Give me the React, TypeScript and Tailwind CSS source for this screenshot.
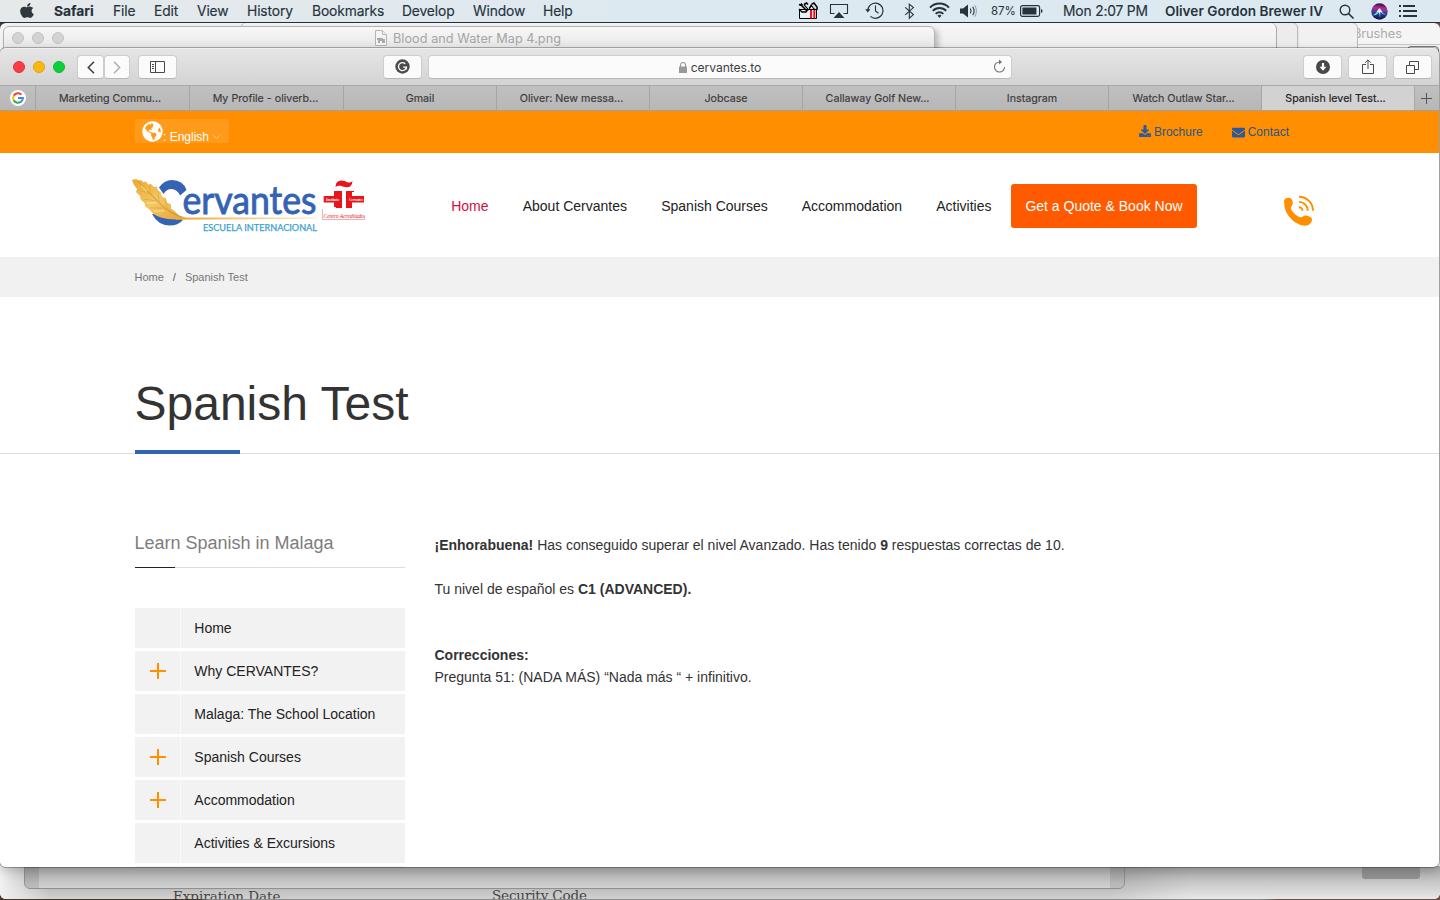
import React from "react";
import { FaApple, FaGlobeAmericas, FaDownload, FaEnvelope } from "react-icons/fa";

const menu = [
  { label: "Safari", cls: "w-[59px] font-bold tracking-[-0.02px]" },
  { label: "File", cls: "w-[41px]" },
  { label: "Edit", cls: "w-[43px]" },
  { label: "View", cls: "w-[50px]" },
  { label: "History", cls: "w-[65px]" },
  { label: "Bookmarks", cls: "w-[90px]" },
  { label: "Develop", cls: "w-[71px]" },
  { label: "Window", cls: "w-[70px]" },
  { label: "Help", cls: "w-[40px]" },
];

const tabs = [
  { label: "Marketing Commu...", cls: "pr-[5px]" },
  { label: "My Profile - oliverb...", cls: "pr-[2px]" },
  { label: "Gmail", cls: "" },
  { label: "Oliver: New messa...", cls: "pr-[3px]" },
  { label: "Jobcase", cls: "" },
  { label: "Callaway Golf New...", cls: "pr-[3px]" },
  { label: "Instagram", cls: "" },
  { label: "Watch Outlaw Star...", cls: "pr-[3px]" },
];

const nav = [
  { label: "Home", cls: "w-[71.5px] text-[#d0103f]" },
  { label: "About Cervantes", cls: "w-[138.5px]" },
  { label: "Spanish Courses", cls: "w-[140.5px]" },
  { label: "Accommodation", cls: "w-[134.5px]" },
  { label: "Activities", cls: "w-[75px]" },
];

const sideLinks = [
  { label: "Home", plus: false },
  { label: "Why CERVANTES?", plus: true },
  { label: "Malaga: The School Location", plus: false },
  { label: "Spanish Courses", plus: true },
  { label: "Accommodation", plus: true },
  { label: "Activities & Excursions", plus: false },
  { label: "", plus: false },
];

function StatusIcons() {
  return (
    <svg width="190" height="22" viewBox="795 0 190 22" fill="none" className="shrink-0 text-[#26333c]">
      <path d="M799.5 9.500h17v9h-17z" fill="#e8f0f4" stroke="#000" />
      <path d="M799 9l3 3h4l1.500-2" stroke="#000" strokeWidth="1.300" />
      <path d="M799 4.500l2.500 1L807 11M801 3.500l1.500 2M804 4.500l5 5.500M804 4.500l2.500-1.500 1.500 1.500M809 9l3-5 2-1 3 4v3M811.500 5l3.500 5" stroke="#000" strokeWidth="1.500" />
      <path d="M805.500 5l3.500 4M812 4.500l2.500 4" stroke="#fff" strokeWidth="0.800" />
      <path d="M810 10h2v8.500h-2zM813.300 10h2v8.500h-2z" fill="#ee1018" />
      <path d="M834.5 13.5h-4v-9h17v9h-4" stroke="currentColor" strokeWidth="1.1" />
      <path d="M833.5 18l5.5-6 5.5 6z" fill="currentColor" />
      <path d="M867.8 10.5a7.6 7.6 0 1 1 2.6 5.9" stroke="currentColor" strokeWidth="1.2" />
      <path d="M865.2 9.2h5.2l-2.6 3.2z" fill="currentColor" />
      <path d="M875.5 5.5v5.5l3 2.2" stroke="currentColor" strokeWidth="1.1" />
      <path d="M905.2 7.4l8.2 7.2-4.1 3.6V4.2l4.1 3.4-8.2 7.2" stroke="currentColor" strokeWidth="1.1" />
      <g stroke="currentColor" strokeWidth="2">
        <path d="M930 7.6a13.2 13.2 0 0 1 19 0" />
        <path d="M932.8 10.8a9.2 9.2 0 0 1 13.4 0" />
        <path d="M935.7 13.9a5.2 5.2 0 0 1 7.6 0" />
      </g>
      <path d="M939.5 18l-2-2.4a3 3 0 0 1 4 0z" fill="currentColor" />
      <path d="M960 8.5h3l5-4v13l-5-4h-3z" fill="currentColor" />
      <path d="M970.3 8.5q1.6 2.5 0 5M972.7 6.7q2.8 4.3 0 8.6" stroke="currentColor" strokeWidth="1.1" />
      <path d="M974.8 5.2q3.2 5.8 0 11.6" stroke="#8fa0aa" strokeWidth="1" />
    </svg>
  );
}

function MenuBar() {
  return (
    <header className="relative z-10 flex h-[23px] items-center border-b border-[#22303a] bg-gradient-to-r from-[#e6e9ea] via-[#dce9f1] to-[#dce9f0] pl-[20px] text-[13.8px] leading-[22px] text-[#26333c]">
      <FaApple className="mb-[2px] h-[17px] w-[14px] shrink-0 text-[#30383d]" preserveAspectRatio="none" />
      <nav className="ml-[20px] flex w-[741px] shrink-0 tracking-[-0.12px] [-webkit-text-stroke:0.15px]">
        {menu.map((m) => (
          <span key={m.label} className={`shrink-0 whitespace-nowrap ${m.cls}`}>
            {m.label}
          </span>
        ))}
      </nav>
      <StatusIcons />
      <span className="ml-[6px] w-[29px] text-[11.5px] tracking-[-0.1px]">87%</span>
      <svg width="24" height="12" viewBox="0 0 24 12" className="shrink-0">
        <rect x="0.6" y="0.6" width="19" height="10.8" rx="1.8" fill="none" stroke="#26333c" strokeWidth="1.2" />
        <rect x="2.4" y="2.4" width="14" height="7.2" rx="0.5" fill="#26333c" />
        <path d="M21 4v4q1.6-.6 1.6-2T21 4z" fill="#26333c" />
      </svg>
      <span className="ml-[19px] w-[102px] whitespace-nowrap tracking-[-0.16px] [-webkit-text-stroke:0.15px]">Mon 2:07 PM</span>
      <span className="w-[174px] whitespace-nowrap text-[13.6px] font-semibold tracking-[0.02px]">Oliver Gordon Brewer IV</span>
      <svg width="16" height="16" viewBox="0 0 16 16" fill="none" stroke="#26333c" strokeWidth="1.4" className="mt-px shrink-0">
        <circle cx="6" cy="6" r="4.8" />
        <path d="M9.5 9.5l5 5" strokeWidth="1.7" />
      </svg>
      <svg width="17" height="17" viewBox="0 0 17 17" className="ml-[16px] shrink-0">
        <defs>
          <linearGradient id="siri" x1="0.5" y1="0" x2="0.4" y2="1">
            <stop offset="0" stopColor="#30102e" />
            <stop offset="0.3" stopColor="#b52a9a" />
            <stop offset="0.55" stopColor="#3d3f9e" />
            <stop offset="1" stopColor="#0a1240" />
          </linearGradient>
        </defs>
        <circle cx="8.5" cy="8.5" r="8.2" fill="url(#siri)" />
        <path d="M2 12q3-1 6-5l1 0q3 4 6 5-3 0-5.500-3L9 15 8 9.500Q5 13 2 12z" fill="#63e3f2" />
        <path d="M8.500 5l3.500 4.500-3-1-.5 3-.5-3-3 1z" fill="#fff" opacity="0.900" />
      </svg>
      <svg width="19" height="12" viewBox="0 0 19 12" fill="#26333c" className="ml-[11px] shrink-0">
        <path d="M0 0h2v2H0zM0 5h2v2H0zM0 10h2v2H0zM4 0h12v2H4zM4 5h14v2H4zM4 10h14v2H4z" />
      </svg>
    </header>
  );
}

function BackWindows() {
  return (
    <>
      <div className="absolute left-0 top-[23px] h-[876px] w-[1440px] overflow-hidden rounded-[6px] bg-[#f5f5f5]">
        <div className="absolute left-[1353px] top-[2px] text-[12.800px] leading-[18px] tracking-[-0.05px] text-[#acacac]">Brushes</div>
        <div className="absolute left-[1298px] top-[21px] h-px w-[142px] bg-[#c8c8c8]" />
        <div className="absolute left-[1407px] top-[23px] h-2 w-[32px] rounded-t-[4px] border border-[#777]" />
        <div className="absolute left-[1180px] top-[-1px] h-[40px] w-[178px] rounded-tr-[6px] border border-[#bcbcbc] bg-[#f1f1f1]" />
        <div className="absolute left-[1180px] top-[-1px] h-[40px] w-[118px] rounded-tr-[6px] border border-[#bcbcbc] bg-[#ececec] shadow-sm" />
        <div className="absolute left-[240px] top-0 h-[40px] w-[1037px] rounded-t-[6px] border-x border-[#aaa] bg-[linear-gradient(180deg,#f6f6f6,#eeeeee_24px)]" />
        <div className="absolute left-0 top-[843px] h-[33px] w-[1440px] bg-[linear-gradient(180deg,#a8a8a8,#e8e8e8)]" />
        <div className="absolute left-0 top-[843px] h-[33px] w-[1200px] bg-[linear-gradient(90deg,rgba(0,0,0,0.1)_1110px,transparent_1190px)]" />
        <div className="absolute left-0 top-[843px] h-[33px] w-[50px] bg-[linear-gradient(90deg,#f2f2f2,transparent)]" />
        <div className="absolute left-[1362px] top-[843px] h-[13px] w-[58px] rounded-b-[3px] bg-[#929292]" />
        <div className="absolute left-[173px] top-[864px] font-['DejaVu_Serif'] text-[13.500px] leading-[18px] tracking-[-0.05px] text-[#444]">Expiration Date</div>
        <div className="absolute left-[492px] top-[863px] font-['DejaVu_Serif'] text-[13.500px] leading-[18px] tracking-[-0.15px] text-[#444]">Security Code</div>
      </div>
      <div className="absolute left-[24px] top-[860px] flex h-[29px] w-[1101px] rounded-b-[6px] border border-[#8f8f8f] bg-[linear-gradient(180deg,#929292,#bdbdbd)] px-[14px]">
        <div className="flex-1 bg-[linear-gradient(180deg,#a2a2a2,#d2d2d2)]" />
      </div>
      <div className="absolute left-[3px] top-[26px] flex h-[40px] w-[932px] justify-center rounded-t-[6px] border border-[#b3b3b3] bg-[linear-gradient(180deg,#f8f8f8,#e6e6e6_22px)] shadow-[3px_3px_6px_rgba(0,0,0,0.25)]">
        <div className="absolute left-[8px] top-[5px] flex gap-[8px]">
          {[0, 1, 2].map((i) => (
            <span key={i} className="size-[12px] rounded-full border border-[#c3c3c3] bg-[#d3d3d3]" />
          ))}
        </div>
        <div className="-ml-[2px] flex items-start gap-[6px] pt-[3px] text-[12.700px] leading-[18px] tracking-[0.04px] text-[#a5a5a5]">
          <svg width="12" height="16" viewBox="0 0 12 16" fill="#f4f4f4" stroke="#b5b5b5">
            <path d="M.5.5h7l4 4v11H.5z" />
            <path d="M7.5.5v4h4" />
            <path d="M2 8h6v1h2v4H7v-2H5v2H3v-3H2z" fill="#aaa" stroke="none" />
          </svg>
          <span className="whitespace-nowrap">Blood and Water Map 4.png</span>
        </div>
      </div>
    </>
  );
}

const btn = "flex h-[24px] items-center justify-center rounded-[4px] border border-[#cdcdcd] border-b-[#b7b7b7] bg-[#fbfbfb]";

function Toolbar() {
  return (
    <div className="flex h-[37px] shrink-0 items-center border-t border-[#f0f0f0] bg-gradient-to-b from-[#e5e5e5] to-[#d3d3d3] pl-[13px]">
      <div className="flex gap-[8px]">
        <span className="size-[12px] rounded-full border border-[#e0303a] bg-[#fc3b45]" />
        <span className="size-[12px] rounded-full border border-[#e0a010] bg-[#fdb90b]" />
        <span className="size-[12px] rounded-full border border-[#12b831] bg-[#08d13c]" />
      </div>
      <div className={`${btn} ml-[12px] w-[27px]`}>
        <svg width="8" height="13" viewBox="0 0 8 13" fill="none" stroke="#3c3c3c" strokeWidth="1.5"><path d="M7 .8L1.3 6.5 7 12.2" /></svg>
      </div>
      <div className={`${btn} w-[26px]`}>
        <svg width="8" height="13" viewBox="0 0 8 13" fill="none" stroke="#adadad" strokeWidth="1.4"><path d="M1 .8l5.7 5.7L1 12.2" /></svg>
      </div>
      <div className={`${btn} ml-[8px] w-[39px]`}>
        <svg width="15" height="12" viewBox="0 0 15 12" fill="none" stroke="#484848">
          <path d="M.5.5h14v11H.5zM5.500.5v11M2 3.500h2M2 5.500h2M2 7.500h2" />
        </svg>
      </div>
      <div className={`${btn} ml-[206px] w-[39px]`}>
        <svg width="15" height="15" viewBox="0 0 15 15" className="mb-px">
          <circle cx="7.5" cy="7.500" r="7.2" fill="#4c4c4c" />
          <path d="M10.200 4.700a4 4 0 1 0 1.200 3.500H8.200m3.200 0v2.200" fill="none" stroke="#fff" strokeWidth="1.300" />
        </svg>
      </div>
      <div className={`${btn} relative ml-[6px] w-[584px] gap-[4px] text-[12.200px] leading-[20px] text-[#3f3f3f]`}>
        <svg width="8" height="11" viewBox="0 0 8 11" fill="#999">
          <path d="M0 4.600h8V11H0z" />
          <path d="M1.500 5V3a2.500 2.500 0 0 1 5 0v2" fill="none" stroke="#999" strokeWidth="1.100" />
        </svg>
        <span className="mt-px tracking-[-0.1px]">cervantes.to</span>
        <svg width="13" height="14" viewBox="0 0 13 14" className="absolute right-[5px] top-[3px]" fill="none" stroke="#707070" strokeWidth="1.100">
          <path d="M8 3H6.500a5 5 0 1 0 5 5" />
          <path d="M6 .5L9 3 6 5.500z" fill="#707070" stroke="none" />
        </svg>
      </div>
      <div className={`${btn} ml-[291px] w-[39px]`}>
        <svg width="14" height="14" viewBox="0 0 14 14">
          <circle cx="7" cy="7" r="7" fill="#484848" />
          <path d="M5.900 3h2.200v3.700h2.400L7 10.800 3.500 6.700h2.400z" fill="#fff" />
        </svg>
      </div>
      <div className={`${btn} ml-[6px] w-[39px]`}>
        <svg width="12" height="15" viewBox="0 0 12 15" fill="none" stroke="#484848" className="mb-px">
          <path d="M4 5.500H.5v9h11v-9H8M6 10V1M3.200 3.700L6 .9l2.800 2.800" />
        </svg>
      </div>
      <div className={`${btn} ml-[6px] w-[39px]`}>
        <svg width="13" height="13" viewBox="0 0 13 13" fill="none" stroke="#484848">
          <path d="M.5 4.500h8v8h-8zM3.500 4.500v-4h9v8h-4" />
        </svg>
      </div>
    </div>
  );
}

function TabBar() {
  return (
    <div className="flex h-[26px] shrink-0 border-y border-t-[#a9a9a9] border-b-[#a2a2a2] bg-gradient-to-b from-[#c0c0c0] to-[#b7b7b7] text-[10.700px] leading-[26px] text-[#3a3a3a] [-webkit-text-stroke:0.15px]">
      <div className="flex w-[36px] items-center justify-center border-r border-[#a5a5a5]">
        <svg width="16" height="16" viewBox="0 0 16 16" fill="none" strokeWidth="2">
          <circle cx="8" cy="8" r="8" fill="#fff" />
          <path d="M11.500 4.600A4.900 4.900 0 0 0 3.700 5.800" stroke="#ea4335" />
          <path d="M3.800 5.500a4.900 4.900 0 0 0 0 5" stroke="#fbbc05" />
          <path d="M3.700 10.300a4.900 4.900 0 0 0 7.500 1.300" stroke="#34a853" />
          <path d="M11.100 11.700A4.900 4.900 0 0 0 12.900 8H8" stroke="#4285f4" />
        </svg>
      </div>
      <div className="grid h-[24px] w-[1226px] grid-cols-[154px_154px_repeat(6,153px)] grid-rows-[24px]">
        {tabs.map((t) => (
          <div key={t.label} className={`whitespace-nowrap border-r border-[#a5a5a5] text-center ${t.cls}`}>
            {t.label}
          </div>
        ))}
      </div>
      <div className="h-[24px] w-[153px] border-r border-[#a9a9a9] bg-[#d2d2d2] pr-[5px] text-center text-[#202020]">Spanish level Test...</div>
      <div className="flex flex-1 items-center justify-center pr-px">
        <svg width="11" height="11" viewBox="0 0 11 11" stroke="#555"><path d="M0 5.500h11M5.500 0v11" /></svg>
      </div>
    </div>
  );
}

function Logo() {
  return (
    <svg width="232" height="58" viewBox="134 176 232 58" className="shrink-0 overflow-visible">
      <defs>
        <linearGradient id="feather" x1="0" y1="0" x2="1" y2="1">
          <stop offset="0" stopColor="#eaa92f" />
          <stop offset="0.5" stopColor="#f3c765" />
          <stop offset="1" stopColor="#e5a336" />
        </linearGradient>
        <linearGradient id="line" gradientUnits="userSpaceOnUse" x1="176" x2="317" y1="218" y2="218">
          <stop offset="0" stopColor="#e9ac38" />
          <stop offset="1" stopColor="#e9ac38" stopOpacity="0.2" />
        </linearGradient>
      </defs>
      <path d="M159 187.500Q164 180 172 180q11 0 14.500 10l-6.500 5.500q-3-6.500-8.500-6.500-5 0-8 5zM152 214q6 11.500 18 11.500 8 0 13-5.500l-7-5z" fill="#3563b4" />
      <path transform="translate(0.5 0)" d="M135.500 179l3 1.500 2-.5 2 2 3-.5 2 3 3-.5 3 3 3-.5 1 4 3 2 1 4 4 2 1 4 4 2v4l4 3 3 3 3 2 4 2-9 1-8-.5-7-1.500-5-2-4-3-3-3.500-3.500-2-1-4-3.500-3-1-4-4-4 1-3-3-4-2-5z" fill="url(#feather)" />
      <path d="M137.500 181q12 12 21 21 12 13 27 16" fill="none" stroke="#cf8c27" strokeWidth="0.900" />
      <path d="M140 190l9 4M144 199l12 2M150 208l14 0M151 194l-2-9M159 202l-1-11M167 209l-2-11" fill="none" stroke="#d99a35" strokeWidth="0.500" />
      <path d="M147 191l-6-5M156 203l-9 0M164 211l-10 0" stroke="#ffe8ab" strokeWidth="0.900" />
      <path d="M176 217.500h141v1.200l-141 1z" fill="url(#line)" />
      <text x="182.500" y="214" fill="#3563b4" stroke="#3563b4" strokeWidth="0.900" fontFamily="Lato, sans-serif" fontSize="38" textLength="134" lengthAdjust="spacingAndGlyphs">ervantes</text>
      <text x="203" y="231" fill="#399fd3" stroke="#399fd3" strokeWidth="0.250" fontFamily="Lato, sans-serif" fontSize="9.200" textLength="114" lengthAdjust="spacingAndGlyphs">ESCUELA INTERNACIONAL</text>
      <g fill="#e8161b">
        <path d="M335.500 187q0-6.500 6-6.500 3 .2 6 1.800 2.500.8 5-1.300-.5 6.500-6 6.300-3-.2-6-1.500-3-.5-5 1.200zM334 191h8v17h-6v-1h-2zM346 191h8v1h-2v16h-6zM323.700 196h12v6.500h-12zM352 196h12v6.500h-12z" />
        <text x="326" y="200.700" fill="#fff" fontFamily="Liberation Serif" fontWeight="bold" fontSize="3.600" textLength="13" lengthAdjust="spacingAndGlyphs">Instituto</text>
        <text x="349" y="200.700" fill="#fff" fontFamily="Liberation Serif" fontWeight="bold" fontSize="3.600" textLength="14" lengthAdjust="spacingAndGlyphs">Cervantes</text>
        <text x="323.500" y="218" fontFamily="Liberation Serif" fontStyle="italic" fontSize="6.200" textLength="40.500" lengthAdjust="spacingAndGlyphs">Centro Acreditado</text>
      </g>
      <path d="M322.500 209v10.500h42v-4" fill="none" stroke="#e8161b" strokeWidth="0.600" opacity="0.600" />
    </svg>
  );
}

function Site() {
  return (
    <main className="flex-1 overflow-hidden bg-white font-['Liberation_Sans',sans-serif] text-[14px] text-[#222]">
      <div className="flex h-[42px] bg-[#ff8f00] pl-[135px] pr-[150px] text-[12px]">
        <div className="mt-[8px] flex h-[24px] w-[94px] rounded-[2px] bg-white/10 pl-[7px] text-white">
          <FaGlobeAmericas className="mt-[2px] size-[21px]" />
          <span className="mt-[10px] whitespace-nowrap leading-[16px]">: English</span>
          <svg width="7" height="4" viewBox="0 0 7 4" fill="none" stroke="#ffd18c" className="ml-[4px] mt-[16px]"><path d="M.5.5l3 3 3-3" /></svg>
        </div>
        <div className="ml-auto flex h-[42px] items-center text-[#2d5586]">
          <FaDownload className="mb-[2px] mr-[3px] size-[12px] text-[#2b5a96]" />
          <span className="mr-[29px]">Brochure</span>
          <FaEnvelope className="mr-[3px] h-[13px] w-[13px] text-[#2b5a96]" />
          <span>Contact</span>
        </div>
      </div>
      <div className="flex h-[104px] items-center pl-[134px]">
        <Logo />
        <nav className="ml-[85.200px] flex pt-[3px]">
          {nav.map((n) => (
            <span key={n.label} className={`whitespace-nowrap ${n.cls}`}>{n.label}</span>
          ))}
        </nav>
        <button className="-ml-[0.200px] mt-[2px] h-[44px] w-[186px] shrink-0 whitespace-nowrap rounded-[3px] bg-[#ff5a00] pt-px text-white">Get a Quote &amp; Book Now</button>
        <svg width="32" height="32" viewBox="0 0 32 32" className="ml-[86px] mt-[12px] shrink-0" fill="#ff8f00">
          <path d="M1 6.500Q1 4.500 2.500 3.500 5.500 2 8 3.500q1.500 1 1.800 4 .2 2.500-1.500 4-1 1.200 0 3 1.500 3 4.500 5.500 2.500 2 4.700 2.200 1.500.2 2.500-.7 1.500-1.300 4-.8 3 .5 4.300 2 1.500 2-.3 5-1.500 2.500-5.500 3-5 .2-10.500-3.500-6-4.300-8.800-10.200Q1 12 1 6.500z" />
          <path d="M16 1.700a14 14 0 0 1 14 14M16 6.900a8.800 8.800 0 0 1 8.800 8.800M16 12.200a3.500 3.500 0 0 1 3.500 3.500" fill="none" stroke="#ff8f00" strokeWidth="1.900" />
        </svg>
      </div>
      <div className="flex h-[40px] items-center gap-[9px] bg-[#f1f1f1] pl-[134.500px] text-[11px] text-[#777]">
        <span>Home</span><span className="text-[#555]">/</span><span>Spanish Test</span>
      </div>
      <div className="flex h-[157px] items-end border-b border-[#ddd] pl-[135px]">
        <h1 className="-mb-px flex h-[80px] w-[105px] items-start whitespace-nowrap border-b-4 border-[#3563b4] text-[48px] leading-[60px] text-[#333]">
          <span className="-ml-[0.500px]">Spanish Test</span>
        </h1>
      </div>
      <div className="flex pl-[135px] pt-[76px]">
        <aside className="w-[270px] shrink-0">
          <h2 className="flex h-[38px] border-b border-[#ddd] text-[18px] leading-[26px] text-[#7d7d7d]">
            <span className="h-[38px] w-[40px] whitespace-nowrap border-b border-[#222] -indent-[0.500px]">Learn Spanish in Malaga</span>
          </h2>
          <ul className="mt-[40px] flex flex-col gap-[3px]">
            {sideLinks.map((l, i) => (
              <li key={i} className="flex h-[40px] items-center bg-[#f2f2f2]">
                <span className="flex h-full w-[46px] items-center justify-center border-r border-[#fafafa]">
                  {l.plus && (
                    <svg width="16" height="16" viewBox="0 0 16 16" fill="#ff8f00"><path d="M7 0h2v16H7zM0 7h16v2H0z" /></svg>
                  )}
                </span>
                <span className="ml-[13.300px] pt-px">{l.label}</span>
              </li>
            ))}
          </ul>
        </aside>
        <article className="ml-[29.500px] mt-[4px] leading-[22px] text-[#333]">
          <p><b>¡Enhorabuena!</b> Has conseguido superar el nivel Avanzado. Has tenido <b>9</b> respuestas correctas de 10.</p>
          <p className="mt-[22px]">Tu nivel de español es <b>C1 (ADVANCED).</b></p>
          <p className="mt-[44px]"><b>Correcciones:</b></p>
          <p>Pregunta 51: (NADA MÁS) “Nada más “ + infinitivo.</p>
        </article>
      </div>
    </main>
  );
}

export default function App() {
  return (
    <div className="relative h-[900px] w-[1440px] overflow-hidden bg-[linear-gradient(90deg,#4a3530_0_200px,#8a8a8a_210px_1260px,#6d4f42_1280px)] font-['Inter',sans-serif]">
      <MenuBar />
      <BackWindows />
      <div className="absolute left-0 top-[48px] flex h-[819px] w-[1439px] flex-col overflow-hidden rounded-[6px] shadow-[0_0_0_1px_rgba(0,0,0,0.28),0_4px_12px_rgba(0,0,0,0.2)]">
        <Toolbar />
        <TabBar />
        <Site />
      </div>
    </div>
  );
}
